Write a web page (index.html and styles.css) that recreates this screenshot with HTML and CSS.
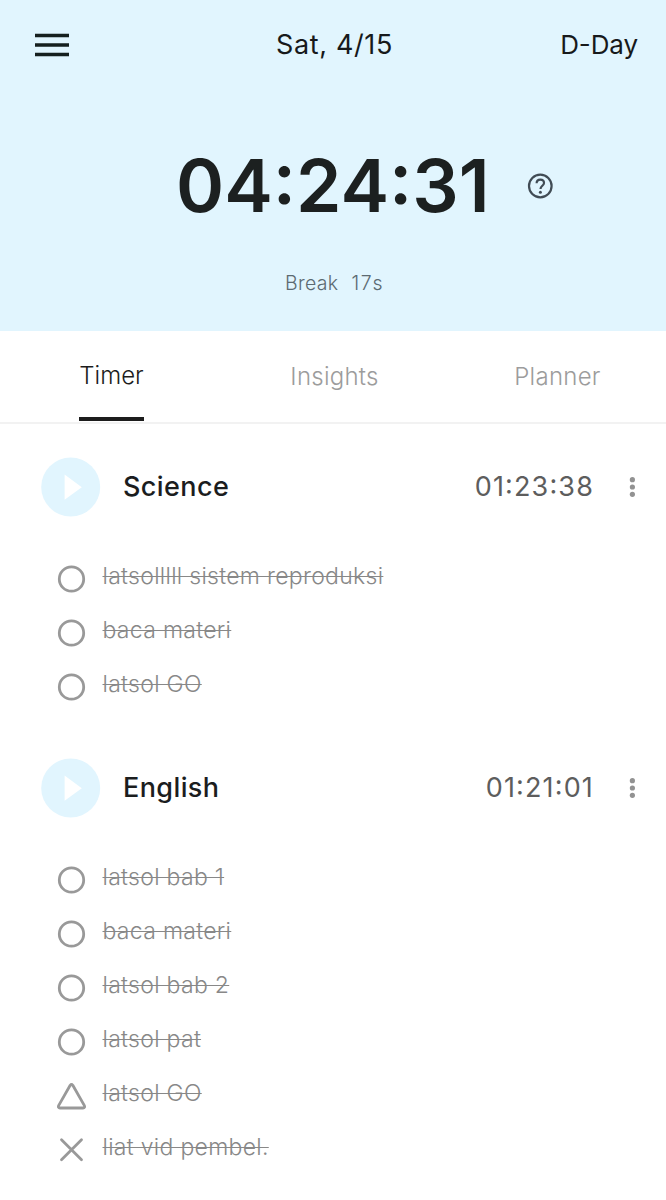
FILE: index.html
```html
<!DOCTYPE html>
<html lang="en">
<head>
<meta charset="utf-8">
<title>Study Timer</title>
<link rel="stylesheet" href="styles.css">
</head>
<body>
<svg class="defs" width="0" height="0" aria-hidden="true">
  <symbol id="play" viewBox="0 0 60 60"><circle cx="29.7" cy="30" r="29.5" fill="#e1f5fe"/><path d="M23.6 17.6v25.2L40.8 30.2z" fill="#fff"/></symbol>
  <symbol id="more" viewBox="0 0 8 24"><circle cx="4.4" cy="4.7" r="2.6"/><circle cx="4.4" cy="12" r="2.6"/><circle cx="4.4" cy="19.3" r="2.6"/></symbol>
  <symbol id="done" viewBox="0 0 30 30"><circle cx="15.5" cy="15" r="12.2"/></symbol>
  <symbol id="partial" viewBox="0 0 30 30"><path d="M14.2 4.3 2.6 24.6Q1.8 26.9 4 27h23q2.2-.1 1.4-2.4L16.8 4.3q-1.3-1.6-2.6 0z"/></symbol>
  <symbol id="missed" viewBox="0 0 30 30"><path d="M5.5 4.7 25.5 24.7M25.5 4.7 5.5 24.7"/></symbol>
</svg>
<header class="hero">
  <div class="topbar">
    <svg class="menu" viewBox="0 0 34 24"><path d="M0 2.5h34M0 12h34M0 21.5h34"/></svg>
    <span class="date">Sat, 4/15</span>
    <span class="dday">D-Day</span>
  </div>
  <div class="clock">
    <span class="total">04:24:31</span>
    <svg class="help" viewBox="0 0 26 26"><circle cx="13.3" cy="13" r="11.3"/><path d="M9.6 10.3q0-3.7 3.7-3.7t3.7 3.4c0 2.7-3.5 2.9-3.5 6"/><circle class="dot" cx="13.4" cy="19.2" r="1.5"/></svg>
  </div>
  <p class="break">Break&nbsp; <span class="secs">17s</span></p>
</header>
<nav class="tabs">
  <span class="tab active"><span class="label">Timer</span></span>
  <span class="tab"><span class="label">Insights</span></span>
  <span class="tab"><span class="label">Planner</span></span>
</nav>
<main>
  <section class="subject">
    <div class="head"><svg class="play"><use href="#play"/></svg><h2>Science</h2><span class="time">01:23:38</span><svg class="more"><use href="#more"/></svg></div>
    <ul>
      <li><svg><use href="#done"/></svg><s>latsolllll sistem reproduksi</s></li>
      <li><svg><use href="#done"/></svg><s>baca materi</s></li>
      <li><svg><use href="#done"/></svg><s>latsol GO</s></li>
    </ul>
  </section>
  <section class="subject">
    <div class="head"><svg class="play"><use href="#play"/></svg><h2>English</h2><span class="time">01:21:01</span><svg class="more"><use href="#more"/></svg></div>
    <ul>
      <li><svg><use href="#done"/></svg><s>latsol bab 1</s></li>
      <li><svg><use href="#done"/></svg><s>baca materi</s></li>
      <li><svg><use href="#done"/></svg><s>latsol bab 2</s></li>
      <li><svg><use href="#done"/></svg><s>latsol pat</s></li>
      <li><svg><use href="#partial"/></svg><s>latsol GO</s></li>
      <li><svg><use href="#missed"/></svg><s>liat vid pembel.</s></li>
    </ul>
  </section>
</main>
</body>
</html>
```
FILE: styles.css
```css
* { box-sizing: border-box; margin: 0; padding: 0; }
body { width: 666px; height: 1200px; overflow: hidden; background: #fff; color: #1b1d1e; font-family: Inter, "Liberation Sans", sans-serif; font-feature-settings: "calt" 1; }
svg { display: block; flex: none; }
.defs { position: absolute; }
.hero { height: 331px; background: #e1f5fe; }
.topbar { display: grid; grid-template-columns: 1fr auto 1fr; align-items: center; height: 89px; padding: 0 28px 0 35px; font-size: 27px; color: #17191b; }
.menu { width: 34px; height: 24px; fill: none; stroke: #15201f; stroke-width: 3.5; }
.date { letter-spacing: .65px; transform: translateX(-2px); }
.dday { justify-self: end; font-size: 26px; letter-spacing: -.1px; }
.clock { display: flex; align-items: center; height: 90px; margin-top: 52px; padding-left: 176px; }
.total { width: 351px; font-size: 73px; line-height: 90px; font-weight: 600; letter-spacing: 0; color: #1c2020; }
.help { width: 26px; height: 26px; margin-top: -1px; fill: none; stroke: #414c55; stroke-width: 2.2; }
.help .dot { fill: #414c55; stroke: none; }
.break { margin-top: 40px; padding-left: 3px; text-align: center; font-size: 19.5px; line-height: 24px; font-weight: 350; letter-spacing: .3px; color: #5c6a72; }
.secs { margin-left: 1.5px; letter-spacing: 1.6px; }
.tabs { display: grid; grid-template-columns: repeat(3, 1fr); height: 93px; border-bottom: 2px solid #f2f2f2; font-size: 24px; font-weight: 350; color: #9c9c9c; }
.tab { display: flex; justify-content: center; }
.tab:nth-child(2) { padding-left: 3px; }
.tab:nth-child(3) { padding-left: 5px; }
.label { padding-top: 31px; line-height: 29px; letter-spacing: .25px; }
.active { padding-left: 1px; }
.active .label { height: 90px; padding-top: 30px; border-bottom: 4px solid #1c1c1c; letter-spacing: 0; color: #1c1c1c; }
main { padding-top: 33px; }
.subject { margin-bottom: 44px; }
.head { display: flex; align-items: center; height: 60px; padding: 0 30px 0 41px; }
.play { width: 60px; height: 60px; }
h2 { flex: 1; margin-left: 22px; font-size: 27px; line-height: 34px; font-weight: 450; letter-spacing: .4px; }
.time { margin-top: -1px; font-size: 27px; letter-spacing: 1.15px; color: #5d5d5d; }
.more { width: 8px; height: 24px; margin-left: 34px; fill: #929292; }
ul { list-style: none; padding: 35px 0 0 56px; }
li { display: flex; align-items: center; gap: 16px; height: 54px; }
li svg { width: 30px; height: 30px; fill: none; stroke: #999; stroke-width: 2.8; stroke-linecap: round; stroke-linejoin: round; }
s { margin-top: -6px; padding-left: .5px; font-size: 23px; line-height: 28px; font-weight: 300; letter-spacing: .3px; color: #888; text-decoration-thickness: 1px; }
```
